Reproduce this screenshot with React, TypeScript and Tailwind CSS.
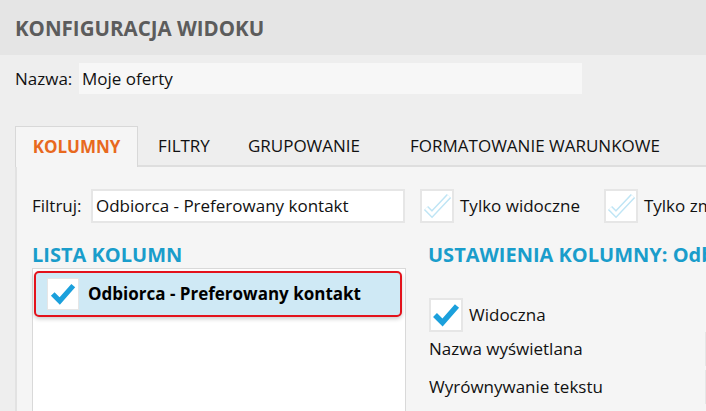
import React from 'react'

const font = "font-['Open_Sans','Noto_Sans',sans-serif]"

function CheckBox({ checked, size = 34, inItem = false }: { checked: boolean; size?: number; inItem?: boolean }) {
  return (
    <div
      className={`shrink-0 flex items-center justify-center bg-white ${inItem ? 'border border-[#e6e6e6]' : 'border-2 border-[#e6e6e6]'}`}
      style={{ width: size, height: size }}
    >
      {checked ? (
        <svg width={size - 4} height={size - 4} viewBox="0 0 30 30">
          <polyline points="4,15 11.5,22.5 26,6" fill="none" stroke="#1ba0dc" strokeWidth="5.5" strokeLinejoin="miter" />
        </svg>
      ) : (
        <svg width={size - 4} height={size - 4} viewBox="0 0 30 30">
          <polyline points="4,17 10,23 27,5" fill="none" stroke="#bfe5f5" strokeWidth="6" strokeLinejoin="miter" />
          <polyline points="4,17 10,23 27,5" fill="none" stroke="#ffffff" strokeWidth="3" strokeLinejoin="miter" />
        </svg>
      )}
    </div>
  )
}

export default function App() {
  return (
    <div className={`w-[706px] h-[411px] overflow-hidden bg-[#eeeeee] text-[17px] text-[#111] ${font}`}>
      {/* Header */}
      <div className="h-[55px] bg-[#e5e5e5] flex items-center px-[15px]">
        <h1 className="text-[20.5px] font-bold text-[#5c5c5c] leading-none mt-[1px]">KONFIGURACJA WIDOKU</h1>
      </div>

      {/* Nazwa */}
      <div className="flex items-center pl-[15px] mt-[8px] h-[31px]">
        <span className="w-[64px] shrink-0">Nazwa:</span>
        <div className="w-[503px] h-[31px] bg-[#f7f7f7] flex items-center pl-[3px]">Moje oferty</div>
      </div>

      {/* Tabs */}
      <div className="ml-[15px] mt-[33px] flex items-end h-[40px] border-b-2 border-[#dedede]">
        <div className="w-[123px] h-[41px] -mb-[2px] bg-[#f5f5f5] border border-b-0 border-[#d8d8d8] flex items-center justify-center font-bold text-[#e8691e]">
          KOLUMNY
        </div>
        <div className="w-[92px] h-full flex items-center justify-center">FILTRY</div>
        <div className="w-[148px] h-full flex items-center justify-center">GRUPOWANIE</div>
        <div className="w-[314px] h-full flex items-center justify-center">FORMATOWANIE WARUNKOWE</div>
      </div>

      {/* Content */}
      <div className="ml-[15px] h-[260px] bg-[#f5f5f5] border-l-2 border-[#e2e2e2] pl-[15px] pt-[22px]">
        {/* Filter row */}
        <div className="flex items-center h-[34px] whitespace-nowrap">
          <span className="w-[59px] shrink-0">Filtruj:</span>
          <div className="w-[314px] h-[34px] shrink-0 bg-white border-2 border-[#e6e6e6] flex items-center pl-[3px]">
            Odbiorca - Preferowany kontakt
          </div>
          <div className="ml-[15px]"><CheckBox checked={false} /></div>
          <span className="ml-[6px]">Tylko widoczne</span>
          <div className="ml-[24px]"><CheckBox checked={false} /></div>
          <span className="ml-[6px]">Tylko zmienione</span>
        </div>

        <div className="flex mt-[18px] whitespace-nowrap">
          {/* Left column */}
          <div className="w-[374px] shrink-0">
            <h2 className="text-[20px] font-bold text-[#1a9dcb] leading-[27px]">LISTA KOLUMN</h2>
            <div className="h-[150px] bg-white border border-[#d9d9d9] pt-[2px] pl-[1px] pr-[3px]">
              <div className="h-[46px] flex items-center pl-[11px] bg-[#cfe9f5] border-2 border-[#e3121b] rounded-[5px] shadow-[0_2px_4px_rgba(0,0,0,0.2)]">
                <CheckBox checked size={32} inItem />
                <span className="ml-[9px] font-bold text-black">Odbiorca - Preferowany kontakt</span>
              </div>
            </div>
          </div>

          {/* Right column */}
          <div className="ml-[22px] flex-1 min-w-0">
            <h2 className="text-[20px] font-bold text-[#1a9dcb] leading-[27px]">USTAWIENIA KOLUMNY: Odbiorca - Preferowany kontakt</h2>
            <div className="flex items-center mt-[30px] pl-[1px]">
              <CheckBox checked />
              <span className="ml-[6px]">Widoczna</span>
            </div>
            <div className="flex items-center h-[34px] pl-[1px]">
              <span className="w-[276px] shrink-0">Nazwa wyświetlana</span>
              <div className="w-[200px] h-[34px] shrink-0 bg-white border-2 border-[#e6e6e6]" />
            </div>
            <div className="flex items-center h-[34px] mt-[4px] pl-[1px]">
              <span className="w-[276px] shrink-0">Wyrównywanie tekstu</span>
              <div className="w-[200px] h-[34px] shrink-0 bg-white border-2 border-[#e6e6e6]" />
            </div>
          </div>
        </div>
      </div>
    </div>
  )
}
